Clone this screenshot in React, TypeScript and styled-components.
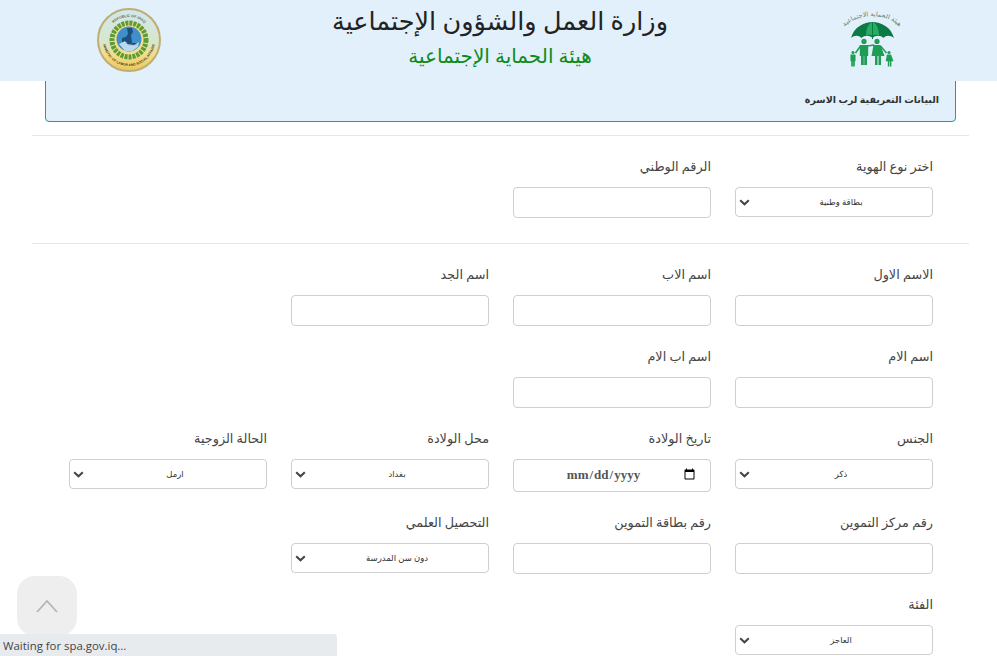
import styled, { createGlobalStyle } from 'styled-components';

const FONT = "'Liberation Serif', 'DejaVu Sans', serif";
const HEADER_BG = '#e2f0fb';
const CHEVRON = "data:image/svg+xml,%3Csvg xmlns='http://www.w3.org/2000/svg' width='11' height='7' viewBox='0 0 11 7'%3E%3Cpath d='M1.2 1.2l4.3 4.1 4.300-4.100' fill='none' stroke='%23444' stroke-width='2'/%3E%3C/svg%3E";

const GlobalStyle = createGlobalStyle`
  html, body {
    margin: 0;
    height: 100%;
    overflow: hidden;
    background: #fff;
  }

  * {
    box-sizing: border-box;
  }
`;

const Header = styled.header`
  position: fixed;
  top: 0;
  left: 0;
  right: 0;
  z-index: 5;
  height: 81px;
  padding: 0 92px 0 97px;
  display: flex;
  align-items: flex-start;
  justify-content: space-between;
  background: ${HEADER_BG};
`;

const Seal = styled.svg`
  width: 64px;
  height: 64px;
  margin-top: 8px;
`;

const FamilyLogo = styled.svg`
  width: 66px;
  height: 60px;
  margin-top: 10px;
`;

const Titles = styled.div`
  display: flex;
  flex-direction: column;
  align-items: center;
  font-family: ${FONT};
  direction: rtl;
`;

const Title = styled.h1`
  margin: 2px 0 0;
  font-size: 25.5px;
  line-height: 40px;
  font-weight: 400;
  color: #222;
`;

const Subtitle = styled.h2`
  margin: 0;
  font-size: 20px;
  line-height: 28px;
  font-weight: 400;
  color: #0f8a1d;
`;

const Page = styled.main`
  direction: rtl;
  padding: 60px 28px 0 32px;
  font-family: ${FONT};
`;

const Alert = styled.div`
  margin: 0 13px;
  height: 62px;
  padding: 26px 16px 0;
  background: ${HEADER_BG};
  border: 1px solid #259c8e;
  border-radius: 4px;
  font-size: 9.500px;
  line-height: 26px;
  font-weight: 700;
  color: #333;
`;

const Divider = styled.hr<{ $top: number }>`
  margin: ${props => props.$top}px 0 0;
  border: 0;
  border-top: 1px solid #e6e6e6;
`;

const Row = styled.div<{ $first?: boolean }>`
  display: grid;
  grid-template-columns: repeat(4, 222px);
  margin: ${props => (props.$first ? 20 : 0)}px 24px 0 25px;
  align-items: start;
`;

const Field = styled.div`
  padding: 0 12px 20px;
  min-width: 0;
`;

const Label = styled.label`
  display: block;
  height: 31px;
  padding-top: 1px;
  font-size: 12.800px;
  line-height: 21px;
  color: #444;
`;

const TextInput = styled.input`
  display: block;
  width: 100%;
  height: 31px;
  padding: 0 12px;
  background: #fff;
  border: 1px solid #cfcfcf;
  border-radius: 4px;
  outline: none;
`;

const DateInput = styled(TextInput)`
  height: 33px;
  padding-bottom: 2px;
  font-family: 'Liberation Serif', serif;
  font-size: 13px;
  font-weight: 700;
  color: #555;
  text-align: center;
`;

const Select = styled.select`
  display: block;
  width: 100%;
  height: 30px;
  padding: 0 0 0 14px;
  appearance: none;
  background: #fff url("${CHEVRON}") no-repeat 3px center;
  border: 1px solid #cfcfcf;
  border-radius: 4px;
  font-family: ${FONT};
  font-size: 8.500px;
  color: #333;
  text-align: center;
  outline: none;
`;

const ScrollTop = styled.button`
  position: fixed;
  left: 17px;
  top: 576px;
  width: 60px;
  height: 60px;
  padding: 0;
  display: flex;
  align-items: center;
  justify-content: center;
  border: 0;
  border-radius: 18px;
  background: #eeeeee;
`;

const StatusBubble = styled.div`
  position: fixed;
  left: 0;
  bottom: 0;
  z-index: 6;
  width: 337px;
  height: 22px;
  padding: 3px 0 0 3px;
  background: #e8ebee;
  border-top-right-radius: 3px;
  font-family: 'Open Sans', 'Liberation Sans', sans-serif;
  font-size: 11.400px;
  line-height: 17px;
  color: #444;
`;

type FieldDef = {
  label: string;
  kind?: 'text' | 'select' | 'date';
  value?: string;
};

const ROWS: FieldDef[][] = [
  [
    { label: 'الاسم الاول' },
    { label: 'اسم الاب' },
    { label: 'اسم الجد' },
  ],
  [
    { label: 'اسم الام' },
    { label: 'اسم اب الام' },
  ],
  [
    { label: 'الجنس', kind: 'select', value: 'ذكر' },
    { label: 'تاريخ الولادة', kind: 'date' },
    { label: 'محل الولادة', kind: 'select', value: 'بغداد' },
    { label: 'الحالة الزوجية', kind: 'select', value: 'ارمل' },
  ],
  [
    { label: 'رقم مركز التموين' },
    { label: 'رقم بطاقة التموين' },
    { label: 'التحصيل العلمي', kind: 'select', value: 'دون سن المدرسة' },
  ],
  [
    { label: 'الفئة', kind: 'select', value: 'العاجز' },
  ],
];

function FormField({ label, kind = 'text', value }: FieldDef) {
  return (
    <Field>
      <Label>{label}</Label>
      {kind === 'select' && (
        <Select defaultValue={value}>
          <option>{value}</option>
        </Select>
      )}
      {kind === 'date' && <DateInput type="date" />}
      {kind === 'text' && <TextInput type="text" />}
    </Field>
  );
}

function MinistrySeal() {
  return (
    <Seal viewBox="0 0 64 64">
      <defs>
        <linearGradient id="sealFill" x1="0" y1="0" x2="0" y2="1">
          <stop offset="0" stopColor="#cfe8f0" />
          <stop offset="0.55" stopColor="#d8e6c8" />
          <stop offset="0.75" stopColor="#f3dc86" />
          <stop offset="1" stopColor="#e9c75f" />
        </linearGradient>
        <path id="sealTop" d="M9 32a23 23 0 0 1 46 0" />
        <path id="sealBottom" d="M6 32a26 26 0 0 0 52 0" />
      </defs>
      <circle cx="32" cy="32" r="31" fill="url(#sealFill)" stroke="#bfae72" strokeWidth="2" />
      <circle cx="32" cy="32" r="19" fill="#f0e08e" />
      <circle cx="32" cy="32" r="17" fill="none" stroke="#5f9a3a" strokeWidth="5" strokeDasharray="3 1" />
      <circle cx="32" cy="31" r="12.5" fill="#3f8fcb" />
      <path d="M30 20h5l1 4-2 3 1 8h5v3h-9l-1-4h-5v-4l4-1 2-3z" fill="#1e4f7d" />
      <path d="M22 36l6-3 2 3 7 1 5-3-1 5-6 4h-7z" fill="#e8f0f4" opacity="0.75" />
      <text fontSize="3.6" fontWeight="700" fill="#6a6a50" fontFamily="'Liberation Sans', sans-serif">
        <textPath href="#sealTop" startOffset="50%" textAnchor="middle">REPUBLIC OF IRAQ</textPath>
      </text>
      <text fontSize="3.4" fontWeight="700" fill="#4a3f20" fontFamily="'Liberation Sans', sans-serif">
        <textPath href="#sealBottom" startOffset="50%" textAnchor="middle">MINISTRY OF LABOR AND SOCIAL AFFAIRS</textPath>
      </text>
    </Seal>
  );
}

function FamilyFigure({ x, y, scale, dress }: { x: number; y: number; scale: number; dress?: boolean }) {
  return (
    <g transform={`translate(${x} ${y}) scale(${scale})`} fill="#1f9d55">
      <circle cx="0" cy="2.4" r="2.6" />
      {dress ? (
        <path d="M-3.5 6h7l4 11h-3.500v9h-2.500v-9h-1v9h-2.500v-9h-3.500z" />
      ) : (
        <path d="M-4.200 6h8.400v11h-1.200v9h-2.800v-9h-.4v9h-2.800v-9h-1.200z" />
      )}
    </g>
  );
}

function ProtectionLogo() {
  return (
    <FamilyLogo viewBox="0 0 66 60">
      <defs>
        <path id="logoArc" d="M1 28C4 -1 62 -1 65 28" />
      </defs>
      <text fontSize="6.4" fill="#5f7a6a" fontFamily="'DejaVu Sans', sans-serif" direction="rtl">
        <textPath href="#logoArc" startOffset="50%" textAnchor="middle">هيئة الحماية الاجتماعية</textPath>
      </text>
      <path d="M12 28C15 17 25 12 33.500 12S52 17 55 28c-4-3-8-3-10.500 0-3-3-8-3-11 0-3-3-8-3-11 0-3-3-7-3-10.500 0z" fill="#0c7a45" />
      <path d="M27 25.500C27 18 30 13 33.500 12c3.500 1 6.500 6 6.500 13.500-2-1-4-1-6.500 0-2.500-1-4.500-1-6.500 0z" fill="#27ad62" />
      <path d="M33 12h1v17h-1z" fill="#0c7a45" />
      <FamilyFigure x={25} y={29} scale={1} />
      <FamilyFigure x={38} y={29} scale={1} dress />
      <FamilyFigure x={14} y={41} scale={0.6} />
      <FamilyFigure x={50} y={41} scale={0.6} dress />
      <path d="M21.500 36l-5 7M41.500 36l6 7M28.500 36l6-1 .5 1" stroke="#1f9d55" strokeWidth="1.500" fill="none" />
    </FamilyLogo>
  );
}

export default function App() {
  return (
    <>
      <GlobalStyle />
      <Header>
        <MinistrySeal />
        <Titles>
          <Title>وزارة العمل والشؤون الإجتماعية</Title>
          <Subtitle>هيئة الحماية الإجتماعية</Subtitle>
        </Titles>
        <ProtectionLogo />
      </Header>
      <Page>
        <Alert>البيانات التعريفية لرب الاسرة</Alert>
        <Divider $top={13} />
        <Row $first>
          <FormField label="اختر نوع الهوية" kind="select" value="بطاقة وطنية" />
          <FormField label="الرقم الوطني" />
        </Row>
        <Divider $top={5} />
        {ROWS.map((fields, index) => (
          <Row key={fields[0].label} $first={index === 0}>
            {fields.map((field) => (
              <FormField key={field.label} {...field} />
            ))}
          </Row>
        ))}
      </Page>
      <ScrollTop aria-label="Scroll to top">
        <svg width="24" height="14" viewBox="0 0 24 14" fill="none" stroke="#b5b5b5" strokeWidth="1.800">
          <path d="M2 13L12 2l10 11" />
        </svg>
      </ScrollTop>
      <StatusBubble>Waiting for spa.gov.iq...</StatusBubble>
    </>
  );
}
